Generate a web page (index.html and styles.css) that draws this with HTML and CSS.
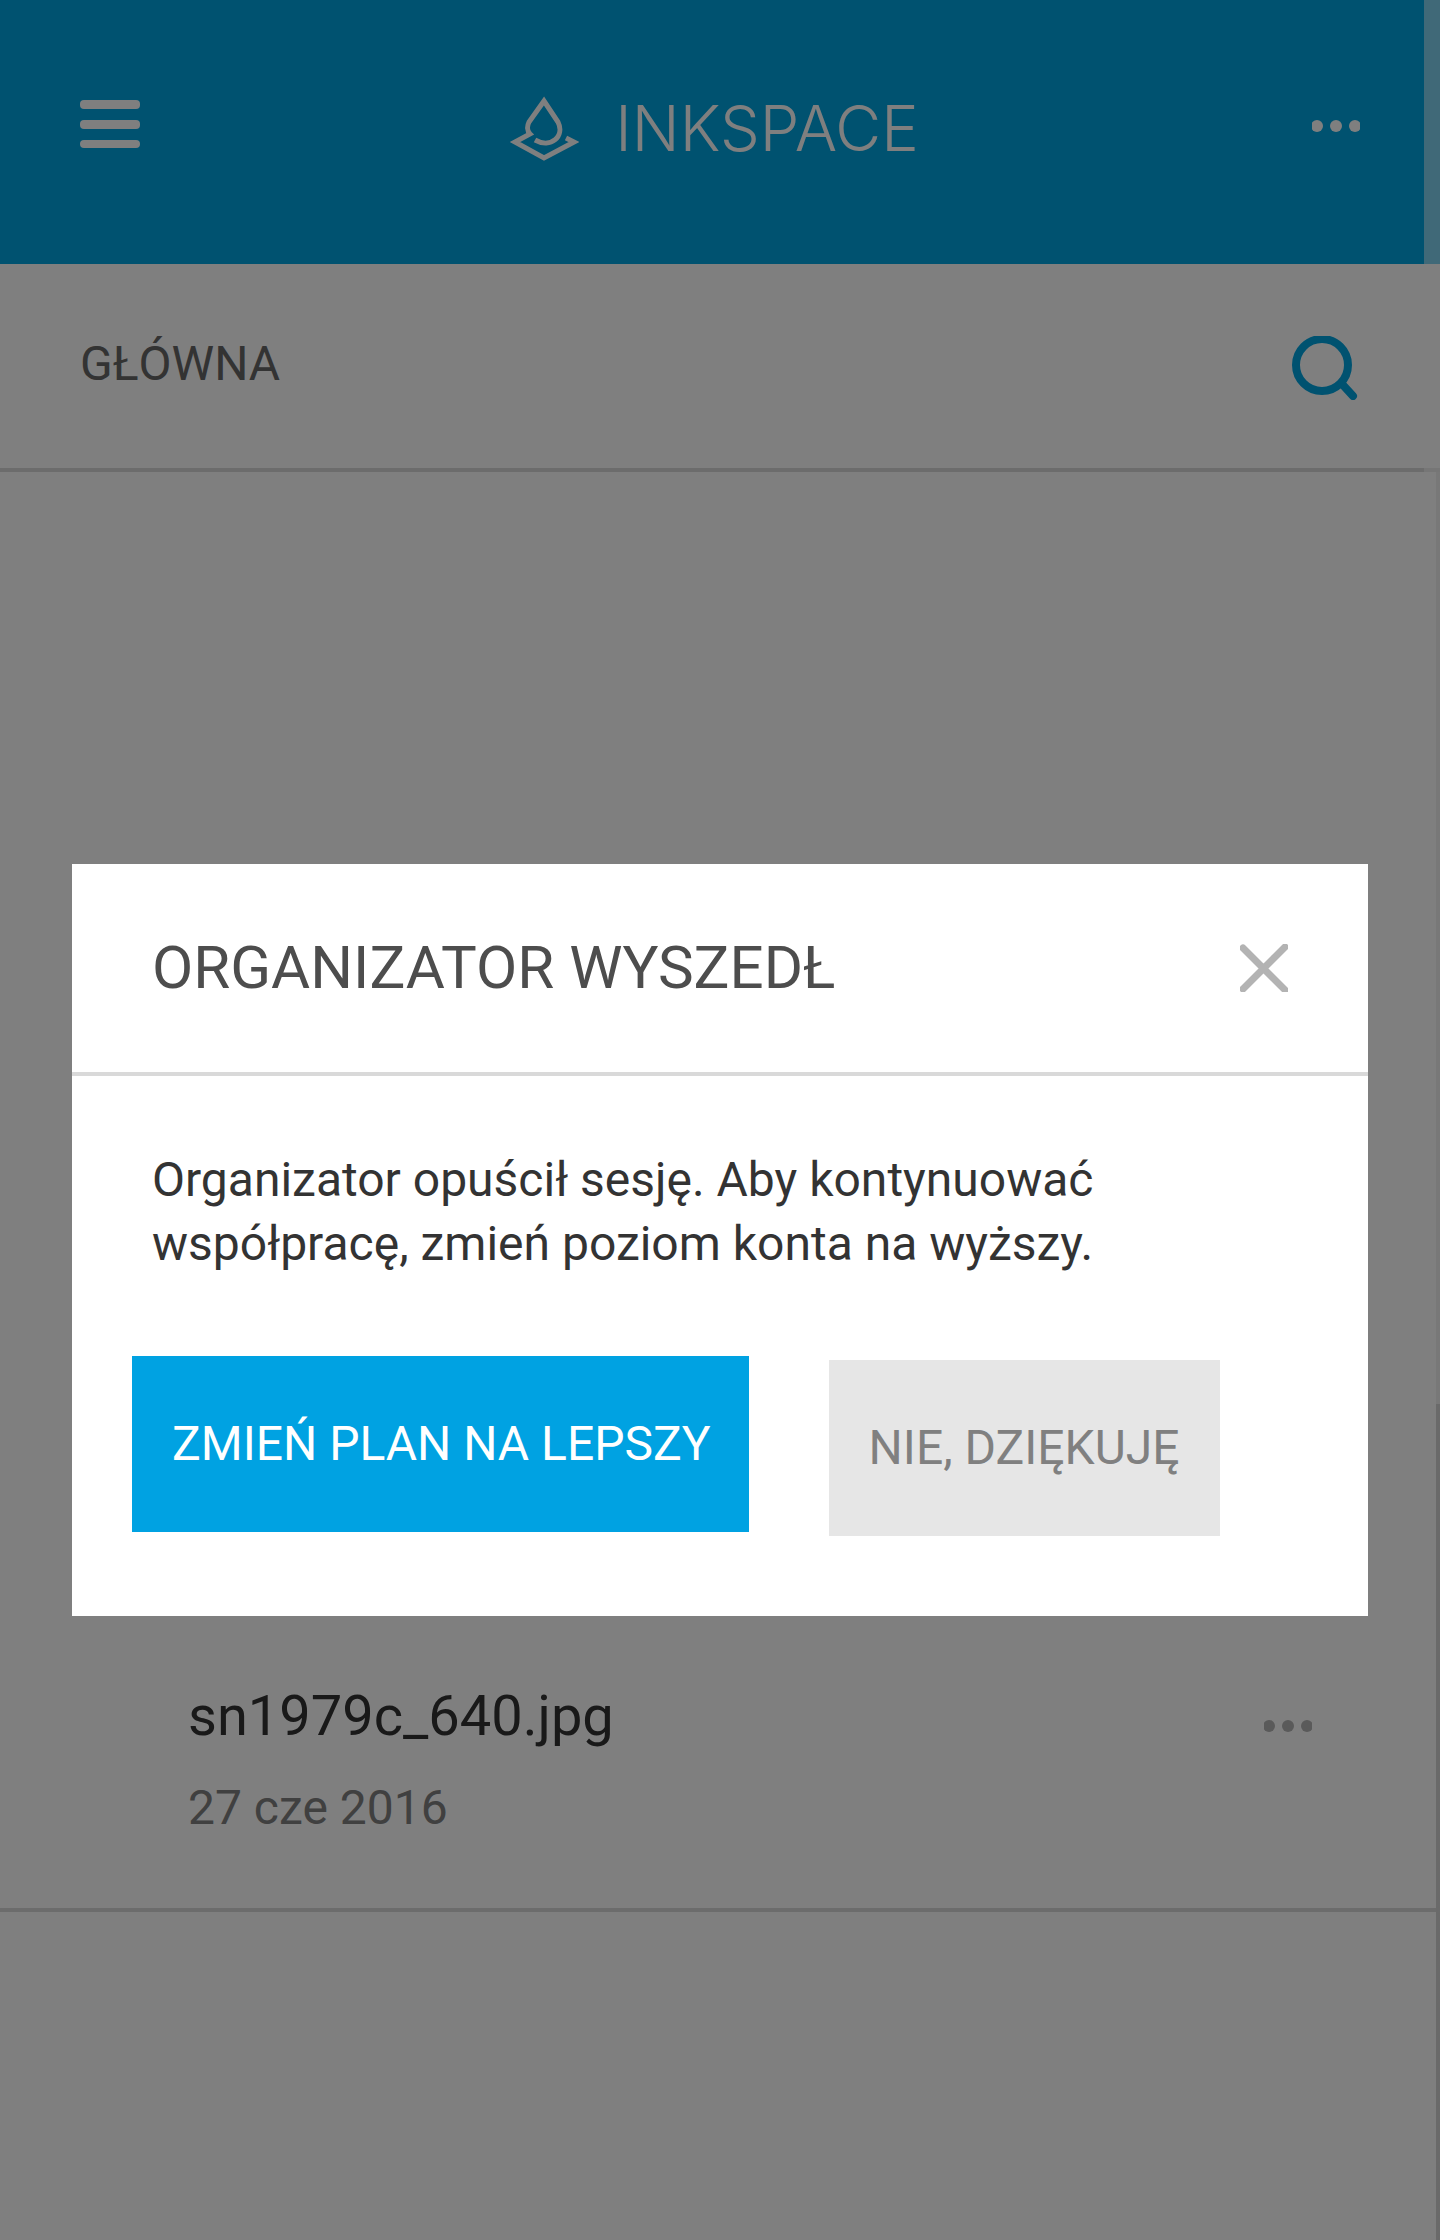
FILE: index.html
```html
<!DOCTYPE html>
<html lang="pl">
<head>
  <meta charset="utf-8">
  <meta name="viewport" content="width=device-width, initial-scale=1">
  <title>Inkspace</title>
  <link rel="stylesheet" href="styles.css">
</head>
<body>
  <div class="app">
    <div class="head">
      <header class="topbar">
        <button class="icon-button" type="button" aria-label="Menu">
          <svg width="60" height="52" viewBox="0 0 60 52" fill="#fff">
            <rect width="60" height="9" rx="4"/>
            <rect y="20" width="60" height="9" rx="4"/>
            <rect y="40" width="60" height="8" rx="4"/>
          </svg>
        </button>
        <a class="brand" href="#">
          <svg width="70" height="68" viewBox="0 0 70 68" fill="none" stroke="#fff" stroke-width="5">
            <path d="M57 44L65 48L35 64L6 48L21 40C18 37 18 32 20 28L35 7L49 28C56 42 42 55 26 46"/>
          </svg>
          <span class="brand-name">INKSPACE</span>
        </a>
        <button class="icon-button" type="button" aria-label="Więcej">
          <svg width="48" height="12" viewBox="0 0 48 12" fill="#fff">
            <circle cx="5" cy="6" r="6"/><circle cx="24" cy="6" r="6"/><circle cx="43" cy="6" r="6"/>
          </svg>
        </button>
      </header>

      <nav class="pathbar">
        <a class="path-link" href="#">GŁÓWNA</a>
        <button class="icon-button" type="button" aria-label="Szukaj">
          <svg width="68" height="64" viewBox="0 0 68 64" fill="none" stroke="#00a4e0" stroke-width="8" stroke-linecap="round">
            <circle cx="30" cy="29" r="26"/>
            <path d="M50 48L61 60"/>
          </svg>
        </button>
      </nav>
      <div class="head-edge"></div>
    </div>

    <main class="files">
      <article class="file">
        <div class="file-info">
          <h2 class="file-name">sn1979c_640.jpg</h2>
          <p class="file-date">27 cze 2016</p>
        </div>
        <button class="icon-button" type="button" aria-label="Opcje pliku">
          <svg width="48" height="12" viewBox="0 0 48 12" fill="#b4b4b4">
            <circle cx="5" cy="6" r="6"/><circle cx="24" cy="6" r="6"/><circle cx="43" cy="6" r="6"/>
          </svg>
        </button>
      </article>
      <div class="scrollbar"><div class="scrollbar-thumb"></div></div>
    </main>
  </div>

  <div class="overlay">
    <section class="dialog" role="dialog" aria-modal="true" aria-labelledby="dialog-title">
      <header class="dialog-header">
        <h1 class="dialog-title" id="dialog-title">ORGANIZATOR WYSZEDŁ</h1>
        <button class="icon-button" type="button" aria-label="Zamknij">
          <svg width="48" height="48" viewBox="0 0 48 48" stroke="#b3b3b3" stroke-width="7" stroke-linecap="round">
            <path d="M3 4L45 46M45 3L3 45"/>
          </svg>
        </button>
      </header>
      <p class="dialog-text">Organizator opuścił sesję. Aby kontynuować współpracę, zmień poziom konta na wyższy.</p>
      <div class="dialog-actions">
        <button class="button button-primary" type="button">ZMIEŃ PLAN NA LEPSZY</button>
        <button class="button button-secondary" type="button">NIE, DZIĘKUJĘ</button>
      </div>
    </section>
  </div>
</body>
</html>
```
FILE: styles.css
```css
* {
  box-sizing: border-box;
}

body {
  margin: 0;
  background: #fff;
  color: #333;
  font: 48px/64px Roboto, "Liberation Sans", sans-serif;
}

h1, h2, p {
  margin: 0;
  font-weight: 400;
}

a {
  text-decoration: none;
}

svg {
  display: block;
}

button {
  border: 0;
  border-radius: 0;
  font: inherit;
}

.icon-button {
  padding: 0;
  background: none;
}

.app {
  display: flex;
  flex-direction: column;
  min-height: 100vh;
}

.head {
  position: relative;
}

.head-edge {
  position: absolute;
  top: 0;
  right: 0;
  bottom: 0;
  width: 16px;
  background: rgba(255, 255, 255, 0.5);
}

.topbar {
  display: grid;
  grid-template-columns: 1fr auto 1fr;
  align-items: center;
  padding: 80px 80px 88px;
  background: #00a4e0;
}

.topbar .icon-button {
  justify-self: start;
  margin-bottom: 4px;
}

.topbar .icon-button:last-child {
  justify-self: end;
}

.brand {
  display: flex;
  align-items: center;
  gap: 36px;
  padding-right: 12px;
  color: #fff;
}

.brand-name {
  font: 300 63px/96px Inter, "Liberation Sans", sans-serif;
}

.pathbar {
  display: flex;
  justify-content: space-between;
  align-items: flex-end;
  padding: 68px 80px;
  border-bottom: 4px solid #d8d8d8;
}

.path-link {
  padding-bottom: 4px;
  color: #666;
}

.files {
  position: relative;
  flex: 1;
  display: flex;
  flex-direction: column;
}

.file {
  display: flex;
  align-items: flex-start;
  justify-content: space-between;
  margin-top: 1104px;
  padding: 104px 128px 68px 188px;
  border-bottom: 4px solid #d8d8d8;
}

.file .icon-button {
  margin-top: 40px;
}

.file-name {
  font-size: 56px;
  line-height: 72px;
}

.file-date {
  margin-top: 24px;
  color: #808080;
}

.scrollbar {
  position: absolute;
  top: 0;
  right: 0;
  bottom: 0;
  display: flex;
  flex-direction: column;
  justify-content: flex-end;
  width: 4px;
  background: #f0f0f0;
}

.scrollbar-thumb {
  height: 836px;
  background: #d4d4d4;
}

.overlay {
  position: fixed;
  inset: 0;
  display: flex;
  flex-direction: column;
  align-items: center;
  padding-top: 864px;
  background: rgba(0, 0, 0, 0.5);
}

.dialog {
  width: 90%;
  background: #fff;
}

.dialog-header {
  display: flex;
  align-items: center;
  justify-content: space-between;
  padding: 64px 80px;
  border-bottom: 4px solid #d9d9d9;
}

.dialog-title {
  color: #4d4d4d;
  font-size: 60px;
  line-height: 80px;
}

.dialog-text {
  padding: 72px 80px 80px;
}

.dialog-actions {
  display: flex;
  align-items: flex-end;
  gap: 80px;
  padding: 0 60px 80px;
}

.button {
  padding: 56px 40px;
}

.button-primary {
  margin-bottom: 4px;
  padding-right: 38px;
  background: #00a2e2;
  color: #fff;
}

.button-secondary {
  background: #e6e6e6;
  color: #808080;
}
```
